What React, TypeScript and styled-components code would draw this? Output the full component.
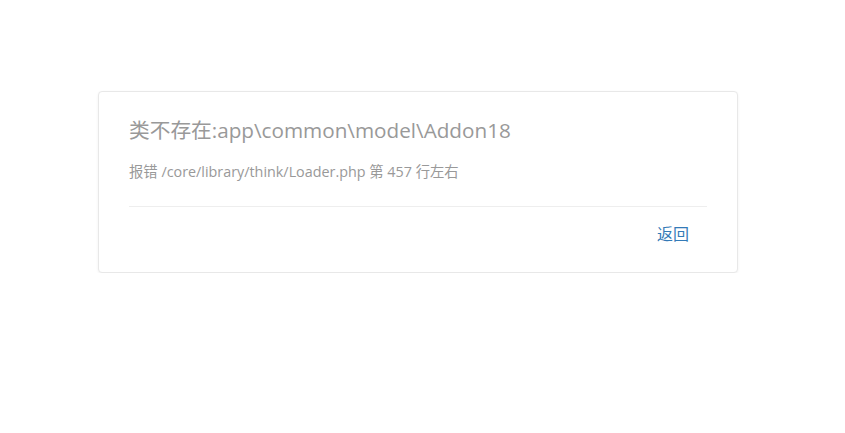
import React from "react";
import styled, { createGlobalStyle } from "styled-components";

const Global = createGlobalStyle`
  html, body { margin: 0; padding: 0; background: #fff; }
  body { font-family: "Open Sans", "Noto Sans CJK SC", sans-serif; }
  *, *::before, *::after { box-sizing: border-box; }
`;

const Page = styled.div`
  padding: 91px 0 0 98px;
`;

const Card = styled.div`
  width: 640px;
  border: 1px solid #e8e8e8;
  border-radius: 4px;
  box-shadow: 0 1px 3px rgba(0, 0, 0, 0.06);
  padding: 23px 30px 27px 30px;
  background: #fff;
`;

const Title = styled.h1`
  margin: 0;
  font-size: 20.7px;
  font-weight: 400;
  color: #999;
  line-height: 30px;
`;

const Detail = styled.p`
  margin: 17px 0 0;
  font-size: 14.35px;
  color: #999;
  line-height: 20px;
`;

const Divider = styled.hr`
  margin: 24px 0 0;
  border: 0;
  border-top: 1px solid #eee;
`;

const Actions = styled.div`
  display: flex;
  justify-content: flex-end;
  padding: 16px 18px 0 0;
`;

const BackLink = styled.a`
  font-size: 16px;
  color: #337ab7;
  text-decoration: none;
  line-height: 22px;
`;

export default function App() {
  return (
    <>
      <Global />
      <Page>
        <Card>
          <Title>类不存在:app\common\model\Addon18</Title>
          <Detail>报错 /core/library/think/Loader.php 第 457 行左右</Detail>
          <Divider />
          <Actions>
            <BackLink href="#">返回</BackLink>
          </Actions>
        </Card>
      </Page>
    </>
  );
}
